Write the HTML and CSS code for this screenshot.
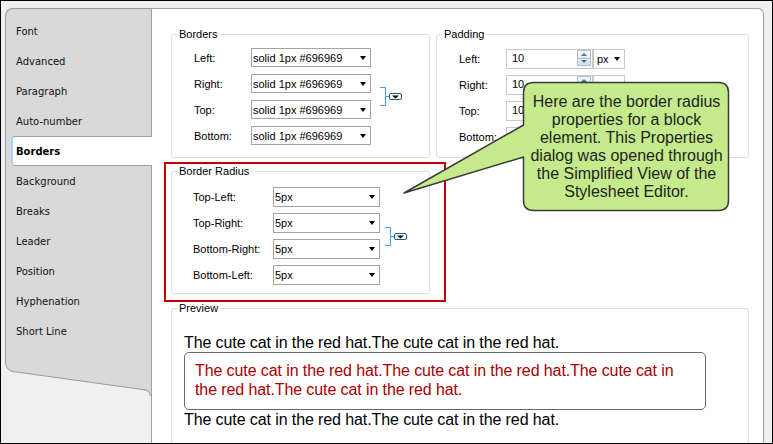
FILE: index.html
```html
<!DOCTYPE html>
<html>
<head>
<meta charset="utf-8">
<link rel="stylesheet" href="styles.css">
</head>
<body>
<div class="frame">
  <aside class="sidebar">
    <ul class="tabs">
      <li class="tab">Font</li>
      <li class="tab">Advanced</li>
      <li class="tab">Paragraph</li>
      <li class="tab">Auto-number</li>
      <li class="tab active">Borders</li>
      <li class="tab">Background</li>
      <li class="tab">Breaks</li>
      <li class="tab">Leader</li>
      <li class="tab">Position</li>
      <li class="tab">Hyphenation</li>
      <li class="tab">Short Line</li>
    </ul>
    <svg class="tabs-foot" width="146" height="36" viewBox="0 0 146 36">
      <path d="M0 0H146V36H145.5Q145 31 141 30L8 11.5Q1 10.5 0.5 2Z" fill="#d9d9d9"/>
      <path d="M0.5 0V2Q1 10.5 8 11.5L141 30Q145 31 145.5 36" fill="none" stroke="#999"/>
    </svg>
  </aside>

  <main class="panel">
    <div class="groups">
      <fieldset class="group">
        <legend>Borders</legend>
        <div class="rows rows-borders">
          <span class="lbl">Left:</span><div class="combo"><span>solid 1px #696969</span></div>
          <span class="lbl">Right:</span><div class="combo"><span>solid 1px #696969</span></div>
          <span class="lbl">Top:</span><div class="combo"><span>solid 1px #696969</span></div>
          <span class="lbl">Bottom:</span><div class="combo"><span>solid 1px #696969</span></div>
          <svg class="link" width="22" height="19" viewBox="0 0 22 19">
            <path d="M0 0.5H5.5V18.5H0M5.5 9.5H9.5" fill="none" stroke="#3ba2e6"/>
            <rect x="9.5" y="6.5" width="12" height="6" rx="1.5" fill="#fff" stroke="#1e5b7a"/>
            <path d="M12 8.5h7l-3.5 3z" fill="#000"/>
          </svg>
        </div>
      </fieldset>

      <fieldset class="group">
        <legend>Padding</legend>
        <div class="rows rows-padding">
          <span class="lbl">Left:</span>
          <div class="num"><span>10</span><span class="spin"><i class="up"></i><i class="down"></i></span></div>
          <div class="combo unit"><span>px</span></div>
          <span class="lbl">Right:</span>
          <div class="num"><span>10</span><span class="spin"><i class="up"></i><i class="down"></i></span></div>
          <div class="combo unit"><span>px</span></div>
          <span class="lbl">Top:</span>
          <div class="num"><span>10</span><span class="spin"><i class="up"></i><i class="down"></i></span></div>
          <div class="combo unit"><span>px</span></div>
          <span class="lbl">Bottom:</span>
          <div class="num"><span>10</span><span class="spin"><i class="up"></i><i class="down"></i></span></div>
          <div class="combo unit"><span>px</span></div>
        </div>
      </fieldset>

      <fieldset class="group g-radius">
        <legend>Border Radius</legend>
        <div class="rows rows-radius">
          <span class="lbl">Top-Left:</span><div class="combo"><span>5px</span></div>
          <span class="lbl">Top-Right:</span><div class="combo"><span>5px</span></div>
          <span class="lbl">Bottom-Right:</span><div class="combo"><span>5px</span></div>
          <span class="lbl">Bottom-Left:</span><div class="combo"><span>5px</span></div>
          <svg class="link" width="22" height="19" viewBox="0 0 22 19">
            <path d="M0 0.5H5.5V18.5H0M5.5 9.5H9.5" fill="none" stroke="#3ba2e6"/>
            <rect x="9.5" y="6.5" width="12" height="6" rx="1.5" fill="#fff" stroke="#1e5b7a"/>
            <path d="M12 8.5h7l-3.5 3z" fill="#000"/>
          </svg>
        </div>
      </fieldset>

      <fieldset class="group g-preview">
        <legend>Preview</legend>
        <div class="preview">
          <p class="pv-text">The cute cat in the red hat.The cute cat in the red hat.</p>
          <p class="pv-text pv-box">The cute cat in the red hat.The cute cat in the red hat.The cute cat in the red hat.The cute cat in the red hat.</p>
          <p class="pv-text">The cute cat in the red hat.The cute cat in the red hat.</p>
        </div>
      </fieldset>
    </div>
  </main>

  <div class="highlight"></div>

  <svg class="bubble" width="332" height="134" viewBox="400 80 332 134">
    <path d="M533.5 82.5H718.5Q728.5 82.5 728.5 92.5V200.5Q728.5 210.5 718.5 210.5H533.5Q523.5 210.5 523.5 200.5V157L404 193L523.5 125V92.5Q523.5 82.5 533.5 82.5Z" fill="#c4ea8b" stroke="#3a3a3a" stroke-width="1.5" stroke-linejoin="round"/>
  </svg>
  <div class="bubble-text">Here are the border radius<br>properties for a block<br>element. This Properties<br>dialog was opened through<br>the Simplified View of the<br>Stylesheet Editor.</div>
</div>
</body>
</html>
```

FILE: styles.css
```css
body {
  margin: 0;
  background: #f0f0f0;
}

.frame {
  position: relative;
  width: 773px;
  height: 444px;
  box-sizing: border-box;
  border: 1px solid #000;
  background: #f0f0f0;
  display: flex;
  align-items: stretch;
  padding: 7px 0 0 4px;
  overflow: hidden;
  font-family: "Liberation Sans", Arial, sans-serif;
  color: #000;
}

/* ---------- tab strip ---------- */
.sidebar {
  width: 146px;
  flex: none;
  display: flex;
  flex-direction: column;
  align-self: flex-start;
}

.tabs {
  list-style: none;
  margin: 0;
  padding: 7px 0 14px;
  background: #d9d9d9;
  border-left: 1px solid #999;
  border-top: 1px solid #999;
  border-top-left-radius: 8px;
  font-family: "DejaVu Sans", Verdana, sans-serif;
  font-size: 10px;
  color: #111;
}

.tab {
  height: 30px;
  line-height: 31px;
  padding-left: 10px;
  white-space: nowrap;
}

.tab.active {
  position: relative;
  z-index: 1;
  box-sizing: border-box;
  margin-left: 5px;
  margin-right: -1px;
  padding-left: 3px;
  line-height: 29px;
  background: #fff;
  border: 1px solid #a0a0a0;
  border-right: none;
  border-left: 2px solid #a9d1f7;
  border-radius: 4px 0 0 4px;
  font-weight: bold;
  color: #000;
}

.tabs-foot {
  display: block;
}

/* ---------- main panel ---------- */
.panel {
  width: 613px;
  flex: none;
  box-sizing: border-box;
  background: #fff;
  border: 1px solid #a0a0a0;
  border-bottom: none;
  border-top-right-radius: 6px;
  padding: 18px 0 0 19px;
}

.groups {
  display: grid;
  grid-template-columns: 259px 313px;
  column-gap: 6px;
  row-gap: 6px;
  align-items: start;
}

.group {
  margin: 0;
  padding: 0;
  min-width: 0;
  border: 1px solid #d5dfe5;
  border-radius: 3px;
}

.group legend {
  margin-left: 5px;
  padding: 0 2px;
  font-size: 11px;
  line-height: 14px;
}

.g-radius {
  grid-column: 1;
}

.g-preview {
  grid-column: 1 / span 2;
  margin-top: 1px;
}

.rows {
  display: grid;
  align-items: center;
  font-size: 11px;
}

.rows-borders {
  grid-template-columns: 57px 120px auto;
  grid-auto-rows: 19px;
  row-gap: 7px;
  padding: 7px 0 12px 22px;
}

.rows-padding {
  grid-template-columns: 47px 87px 32px;
  grid-auto-rows: 20px;
  row-gap: 6px;
  padding: 8px 0 10px 22px;
}

.rows-radius {
  grid-template-columns: 80px 107px auto;
  grid-auto-rows: 20px;
  row-gap: 6px;
  padding: 9px 0 8px 21px;
}

.lbl {
  grid-column: 1;
  white-space: nowrap;
}

.combo {
  grid-column: 2;
  height: 100%;
  box-sizing: border-box;
  border: 1px solid #a3a3a3;
  background: #fff;
  display: flex;
  align-items: center;
  justify-content: space-between;
  padding: 0 4px 0 1px;
  white-space: nowrap;
}

.combo::after {
  content: "";
  border-left: 3px solid transparent;
  border-right: 3px solid transparent;
  border-top: 4px solid #000;
}

.combo.unit {
  grid-column: 3;
  border-color: #c9c9c9;
  padding-left: 3px;
}

.num {
  grid-column: 2;
  height: 100%;
  box-sizing: border-box;
  border: 1px solid #c9c9c9;
  background: #fff;
  display: flex;
  align-items: flex-start;
  justify-content: space-between;
  padding: 0 1px 0 5px;
  line-height: 17px;
}

.spin {
  width: 14px;
  height: 16px;
  display: flex;
  flex-direction: column;
  border: 1px solid #b4c0cc;
  box-sizing: border-box;
  background: linear-gradient(#f2f6fa, #d6e0ea);
}

.spin i {
  flex: 1;
  display: flex;
  align-items: center;
  justify-content: center;
}

.spin i + i {
  border-top: 1px solid #b4c0cc;
}

.spin .up::before {
  content: "";
  border-left: 3px solid transparent;
  border-right: 3px solid transparent;
  border-bottom: 3px solid #4a6f9a;
}

.spin .down::before {
  content: "";
  border-left: 3px solid transparent;
  border-right: 3px solid transparent;
  border-top: 3px solid #4a6f9a;
}

.link {
  grid-column: 3;
  grid-row: 2 / span 2;
  align-self: center;
  display: block;
}

.rows-borders .link {
  margin-left: 9px;
}

.rows-radius .link {
  margin-left: 5px;
}

/* ---------- preview ---------- */
.preview {
  padding: 18px 42px 40px 12px;
}

.pv-text {
  margin: 0;
  font-size: 16px;
  line-height: 19px;
  letter-spacing: -0.1px;
  white-space: normal;
}

.pv-box {
  border: 1px solid #696969;
  border-radius: 5px;
  padding: 8px 10px 10px;
  color: #a80000;
}

/* ---------- annotations ---------- */
.highlight {
  position: absolute;
  left: 163px;
  top: 161px;
  width: 282px;
  height: 140px;
  box-sizing: border-box;
  border: 2px solid #c00000;
}

.bubble {
  position: absolute;
  left: 399px;
  top: 79px;
}

.bubble-text {
  position: absolute;
  left: 523px;
  top: 82px;
  width: 205px;
  height: 128px;
  display: flex;
  align-items: center;
  justify-content: center;
  text-align: center;
  font-size: 16px;
  line-height: 18px;
  white-space: nowrap;
  color: #1f1f1f;
}
```
